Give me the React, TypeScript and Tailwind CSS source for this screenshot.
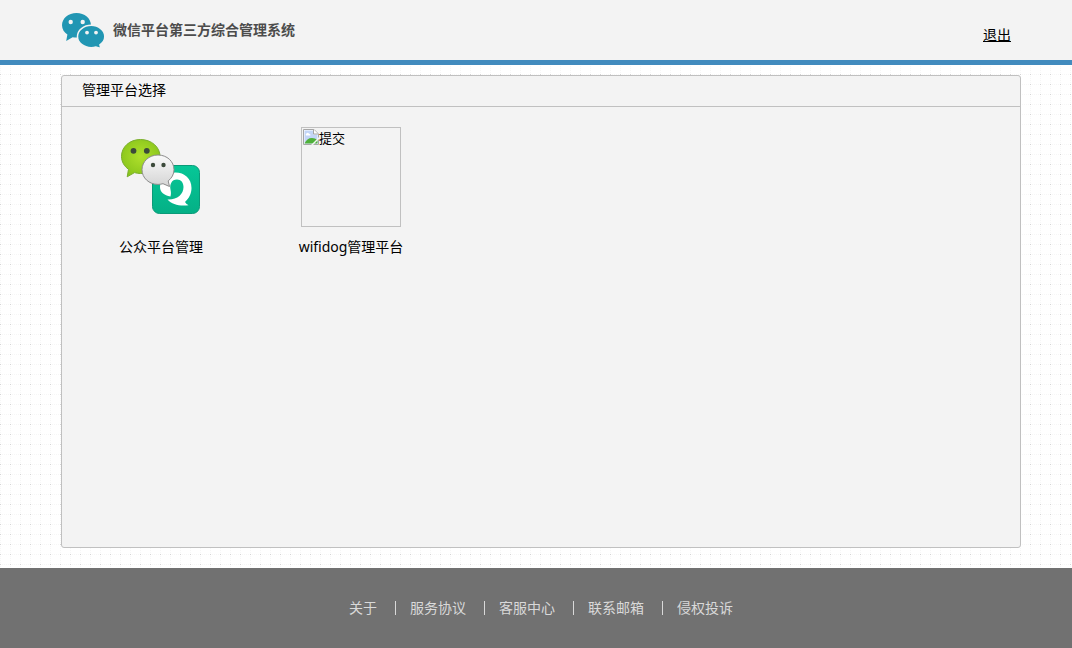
import React from 'react';

interface Platform {
  label: string;
  icon: React.ReactNode;
}

const FOOTER_LINKS = ['关于', '服务协议', '客服中心', '联系邮箱', '侵权投诉'];

function Logo() {
  return (
    <svg viewBox="0 0 44 36" className="h-9 w-11" aria-hidden="true">
      <g fill="#2196b3">
        <path d="M15.500 1C7.400 1 1 6.300 1 13.200c0 4 2.300 7.300 5.400 9.400L5.200 29l6.400-3.800c1.300.3 2.600.4 3.900.4C23.600 25.600 30 20 30 13.200S23.600 1 15.500 1z" />
        <path
          d="M30.200 13.300c-7.500 0-13.700 5-13.700 11.200s6.200 11.200 13.700 11.200c1.700 0 3.300-.2 4.700-.7l5 1.500-1-3.700c3-2 4.900-5 4.900-8.300 0-6.200-6.200-11.200-13.600-11.200z"
          stroke="#f3f3f3"
          strokeWidth="1.500"
        />
      </g>
      <g fill="#f3f3f3">
        <circle cx="9.700" cy="10" r="2.200" />
        <circle cx="21.700" cy="10" r="2.200" />
        <circle cx="26" cy="20.600" r="1.900" />
        <circle cx="35" cy="20.600" r="1.900" />
      </g>
    </svg>
  );
}

function OfficialAccountIcon() {
  return (
    <svg viewBox="0 0 100 100" className="h-full w-full" aria-hidden="true">
      <defs>
        <radialGradient id="green" cx="0.5" cy="0.45" r="0.6">
          <stop offset="0" stopColor="#b0e02c" />
          <stop offset="1" stopColor="#86c31a" />
        </radialGradient>
        <linearGradient id="white" x1="0" y1="0" x2="0" y2="1">
          <stop offset="0" stopColor="#fafafa" />
          <stop offset="1" stopColor="#d4d4d4" />
        </linearGradient>
        <linearGradient id="teal" x1="0" y1="0" x2="0" y2="1">
          <stop offset="0" stopColor="#06c797" />
          <stop offset="1" stopColor="#04b086" />
        </linearGradient>
      </defs>
      <rect x="41.500" y="38.500" width="47" height="48" rx="7" fill="url(#teal)" stroke="#0a9a78" strokeWidth="1" />
      <path
        fill="#fff"
        d="M59.500 69.500C53 68.500 49 65 49 60 49 51.500 56 45.500 64.500 45.500c9 0 16 6 16 15.500 0 5.500-2.500 10.500-6.500 14 1 1.500 2 2.500 3.500 3.200-8.500 1.300-16.500-.7-21-5.700 9.500.5 16-5 16-12.500 0-4.500-2.500-7.500-6.500-7.500-5.500 0-7.500 5-6.500 10 .6 3 .6 4.500 0 7z"
      />
      <path
        d="M29.500 12.500C18.500 12.500 10.500 20 10.500 29.300c0 5.500 2.800 10 7 13l-1.300 7.500 7.300-4.200c2 .6 4 .9 6 .9C40.500 46.500 49 38.500 49 29.300s-8.500-16.800-19.500-16.800z"
        fill="url(#green)"
        stroke="#7aae2c"
        strokeWidth="1"
      />
      <path
        d="M47 28c-9 0-16 6.500-16 14.700S38 57.400 47 57.400c1.800 0 3.500-.3 5-.7l6.500 2.800-1.300-5.600c3.500-2.600 5.800-6.700 5.800-11.200C63 34.500 56 28 47 28z"
        fill="url(#white)"
        stroke="#8c8c8c"
        strokeWidth="1"
      />
      <g fill="#3c4a3a">
        <circle cx="22.500" cy="23.800" r="2.900" />
        <circle cx="35.800" cy="23.800" r="2.900" />
        <circle cx="42" cy="38" r="2.200" />
        <circle cx="52.500" cy="38" r="2.200" />
      </g>
    </svg>
  );
}

function MissingImage({ alt }: { alt: string }) {
  return (
    <span className="flex h-full w-full items-start border border-[#c0c0c0] p-px text-[13px] leading-[18px]">
      <svg viewBox="0 0 16 16" className="h-4 w-4 shrink-0" aria-hidden="true">
        <path d="M.5.5H11L15.500 5v10.500H.5z" fill="#fff" stroke="#a6a6a6" />
        <path d="M1.500 1.500h9V5.500h4v9h-13z" fill="#c3d5f7" />
        <path d="M3 6.500a1.700 1.700 0 0 1 3-1.700 1.500 1.500 0 0 1 1.500 1.700z" fill="#fff" />
        <path d="M1.500 14.500c1.500-3.500 4-5.500 7.500-5.500 2 0 4 .8 5.500 2v3.500z" fill="#4fb03a" />
        <path d="M10.500.5V5H15" fill="#fff" stroke="#a6a6a6" />
        <path d="M8 16l8-8v2L10 16z" fill="#f3f3f3" />
      </svg>
      {alt}
    </span>
  );
}

const PLATFORMS: Platform[] = [
  { label: '公众平台管理', icon: <OfficialAccountIcon /> },
  { label: 'wifidog管理平台', icon: <MissingImage alt="提交" /> },
];

export default function App() {
  return (
    <div className="flex min-h-screen flex-col bg-white bg-[conic-gradient(at_1px_1px,transparent_75%,#d4d4d4_0),conic-gradient(at_1px_1px,transparent_75%,#f7f7f7_0),conic-gradient(at_1px_1px,transparent_75%,#f7f7f7_0)] bg-[length:10px_10px,2px_10px,10px_2px] bg-[position:0_4px] font-['Noto_Sans','Noto_Sans_CJK_SC',sans-serif] text-sm leading-5 text-black">
      {/* Top bar */}
      <header className="border-b-5 border-[#428bbe] bg-[#f3f3f3]">
        <div className="mx-auto flex h-15 max-w-[950px] items-center justify-between">
          <h1 className="flex items-center gap-2 font-bold text-[#4c4c4c]">
            <Logo />
            微信平台第三方综合管理系统
          </h1>
          <a href="#logout" className="mt-2.5 underline">退出</a>
        </div>
      </header>

      {/* Platform picker */}
      <main className="mx-auto flex w-full max-w-[970px] flex-1 flex-col pt-2.5 pb-5 pl-2.5">
        <section className="flex-1 rounded-[3px] border border-[#c0c0c0] bg-[#f3f3f3]">
          <h2 className="border-b border-[#c0c0c0] px-5 pt-1 pb-1.5">管理平台选择</h2>
          <ul className="flex flex-wrap gap-[70px] px-[39px] py-5">
            {PLATFORMS.map((platform) => (
              <li key={platform.label}>
                <button type="button" className="flex w-[120px] cursor-pointer flex-col items-center gap-2.5">
                  <span className="block h-[100px] w-[100px]">{platform.icon}</span>
                  <span className="whitespace-nowrap">{platform.label}</span>
                </button>
              </li>
            ))}
          </ul>
        </section>
      </main>

      <footer className="bg-[#717171] text-[#d9d9d9]">
        <ul className="mx-auto flex h-20 max-w-[970px] items-center justify-center pl-2.5">
          {FOOTER_LINKS.map((label, idx) => (
            <li key={label} className="flex items-center">
              {idx > 0 && <span className="mr-3.5 ml-[18px] h-3.5 w-px bg-[#d9d9d9]" />}
              <a href="#footer">{label}</a>
            </li>
          ))}
        </ul>
      </footer>
    </div>
  );
}
